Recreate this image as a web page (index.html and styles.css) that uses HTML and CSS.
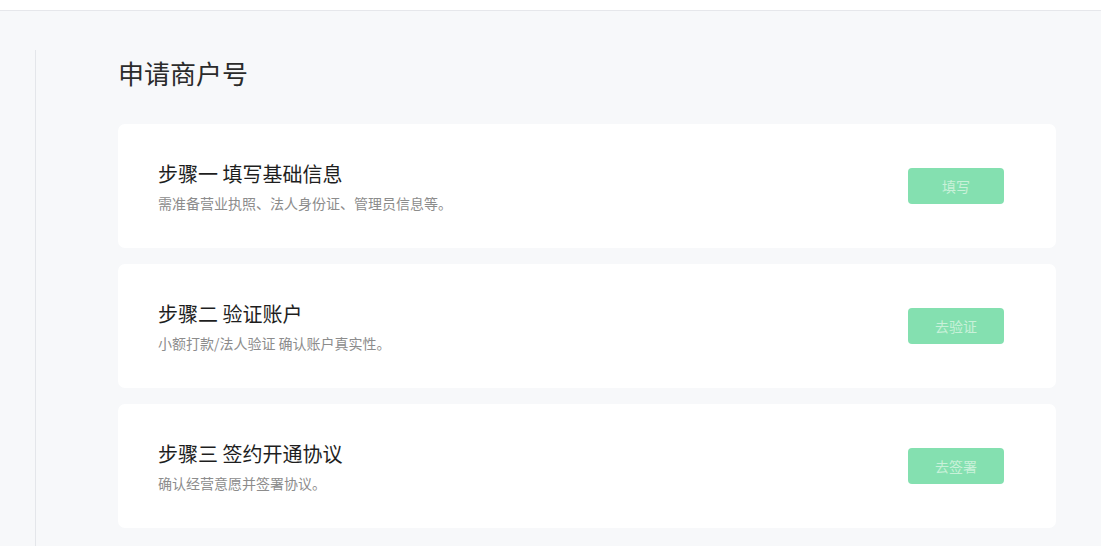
FILE: index.html
```html
<!DOCTYPE html>
<html lang="zh-CN">
<head>
<meta charset="utf-8">
<title>申请商户号</title>
<link rel="stylesheet" href="styles.css">
</head>
<body>
  <header class="topbar"></header>
  <div class="layout">
    <aside class="side"></aside>
    <main class="content">
      <h1 class="page-title">申请商户号</h1>
      <section class="steps">
        <div class="step-card">
          <div class="step-info">
            <h2 class="step-title">步骤一 填写基础信息</h2>
            <p class="step-desc">需准备营业执照、法人身份证、管理员信息等。</p>
          </div>
          <button class="step-btn" type="button">填写</button>
        </div>
        <div class="step-card">
          <div class="step-info">
            <h2 class="step-title">步骤二 验证账户</h2>
            <p class="step-desc">小额打款/法人验证 确认账户真实性。</p>
          </div>
          <button class="step-btn" type="button">去验证</button>
        </div>
        <div class="step-card">
          <div class="step-info">
            <h2 class="step-title">步骤三 签约开通协议</h2>
            <p class="step-desc">确认经营意愿并签署协议。</p>
          </div>
          <button class="step-btn" type="button">去签署</button>
        </div>
      </section>
    </main>
  </div>
</body>
</html>
```

FILE: styles.css
```css
* {
  box-sizing: border-box;
}

html, body {
  margin: 0;
  padding: 0;
  height: 100%;
}

body {
  background: #f7f8fa;
  font-family: "Noto Sans CJK SC", "Noto Sans", sans-serif;
  color: #222;
  overflow: hidden;
}

.topbar {
  height: 11px;
  background: #ffffff;
  border-bottom: 1px solid #e6e7eb;
}

.layout {
  display: flex;
  height: calc(100% - 11px);
}

.side {
  width: 36px;
  flex: none;
  margin-top: 39px;
  border-right: 1px solid #e4e6ea;
}

.content {
  flex: 1;
  padding: 44px 45px 0 82px;
}

.page-title {
  margin: 0 0 33px;
  font-size: 26px;
  line-height: 36px;
  font-weight: 400;
  color: #2b2b2b;
}

.steps {
  display: flex;
  flex-direction: column;
  gap: 16px;
}

.step-card {
  height: 124px;
  background: #ffffff;
  border-radius: 7px;
  display: flex;
  align-items: center;
  justify-content: space-between;
  padding: 0 52px 0 40px;
}

.step-title {
  margin: 0 0 5px;
  font-size: 20px;
  line-height: 28px;
  font-weight: 400;
  color: #1e1e1e;
}

.step-desc {
  margin: 0;
  font-size: 14px;
  line-height: 20px;
  color: #8c8c8c;
}

.step-btn {
  width: 96px;
  height: 36px;
  border: none;
  border-radius: 4px;
  background: #84e0b0;
  color: #c8f1d9;
  font-family: inherit;
  font-size: 14px;
  padding: 0;
  cursor: not-allowed;
}
```
